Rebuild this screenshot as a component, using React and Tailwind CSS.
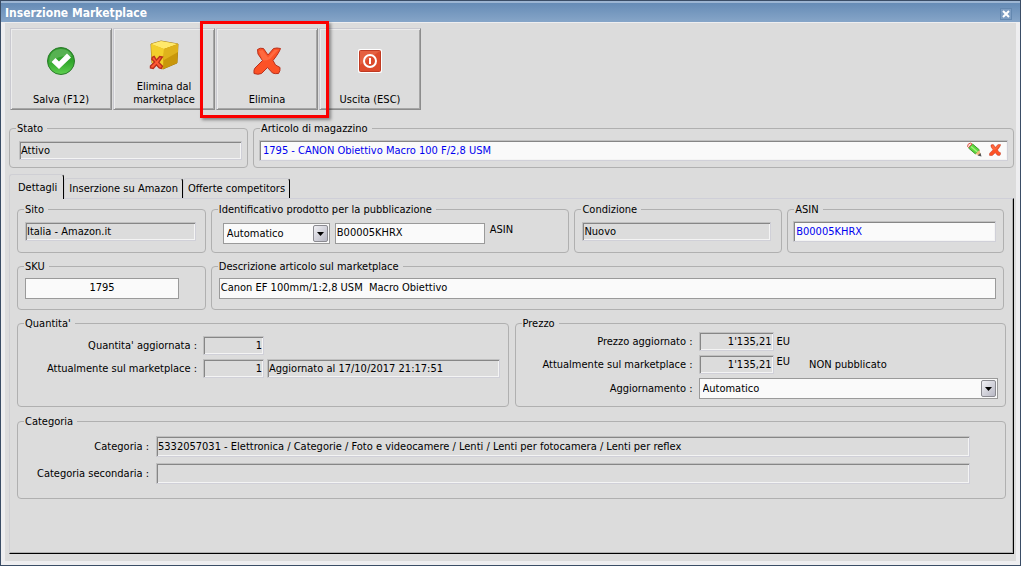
import { useState } from 'react';
import clsx from 'clsx';

const categoria = '5332057031 - Elettronica / Categorie / Foto e videocamere / Lenti / Lenti per fotocamera / Lenti per reflex';

const SaveIcon = () => (
  <svg width="30" height="30" viewBox="0 0 30 30">
    <defs>
      <linearGradient id="save" x1="0" y1="0" x2="0" y2="1">
        <stop offset="0" stopColor="#2f9a2c" />
        <stop offset="0.5" stopColor="#2fa52a" />
        <stop offset="1" stopColor="#5fd04f" />
      </linearGradient>
    </defs>
    <circle cx="15" cy="15" r="13.5" fill="url(#save)" stroke="#2b7a2b" />
    <path d="M3.5 12 A12 12 0 0 1 26 10 Q14 8 3.5 17 Z" fill="#7fc47a" opacity="0.5" />
    <path d="M5.500 16 L9.500 12 L13 15.500 L21 7.500 L25 11.500 L13 23 Z" fill="#fff" />
  </svg>
);

const CrossIcon = ({ size }) => (
  <svg width={size} height={size} viewBox="0 0 28 28">
    <path
      d="M4.500 2.500 Q7 0.500 10.500 1.500 L15 8 L20.500 1.500 Q24 0.500 27.500 1.500 Q26 6 20 13.500 L22.500 18 L27 20.500 Q27.500 24 25.500 26.500 Q22 27 19.500 26 L14.500 20.500 L8.500 26.500 Q5 28 1 26.500 Q0.500 22.500 2 21 L9.500 13.500 L5 7 Z"
      fill="#fc5226"
      stroke="#b8301c"
      strokeLinejoin="round"
    />
    <path d="M6 4 L9.500 3 L15 10.500 L21.500 3 L25 3 L17 12 Q10 15 9 12 Z" fill="#ff6a40" />
  </svg>
);

const BoxIcon = () => (
  <svg width="30" height="30" viewBox="0 0 30 30">
    <path d="M2 4 L12 1 L29 4 L28 23 L14 29 L3 23 Z" fill="#e0b010" stroke="#a8801a" />
    <path d="M2 4 L12 1 L29 4 L15 9 Z" fill="#ffe96b" />
    <path d="M2 4 L15 9 L14 29 L3 23 Z" fill="#f3cf2c" />
    <path d="M15 9 L29 4 L28 23 L14 29 Z" fill="#c9970b" />
    <path d="M15 9 L29 4 L29 12 L15 20 Z" fill="#dfb21c" />
    <g transform="translate(1 16) scale(0.460)">
      <path d="M5 3 L9 1 L14 9 L21 1 L27 2 L19 14 L27 22 L25 27 L20 26 L14 19 L7 27 L1 26 L1 22 L10 13 L4 7 Z" fill="#ff5a34" stroke="#b8301c" strokeWidth="3" />
    </g>
  </svg>
);

const ExitIcon = () => (
  <svg width="24" height="24" viewBox="0 0 24 24">
    <rect width="24" height="24" rx="2" fill="#fff" />
    <rect x="1.500" y="1.500" width="21" height="21" rx="1" fill="#dd4a2c" stroke="#c03a22" />
    <path d="M2 2 H22 L2 16 Z" fill="#ee7656" opacity="0.500" />
    <circle cx="12" cy="12" r="6" fill="none" stroke="#fff" strokeWidth="2" />
    <path d="M12 9 V15" stroke="#fff" strokeWidth="2" />
  </svg>
);

const PencilIcon = () => (
  <svg width="16" height="16" viewBox="0 0 16 16">
    <path d="M2.500 6 L6.500 2 L13.500 8 L9.500 12 Z" fill="#5cd83c" stroke="#3f9a30" />
    <path d="M5 4.500 L11.500 10" stroke="#a8f080" strokeWidth="1.500" />
    <path d="M1.500 4.500 Q1.500 1.500 4.500 1 L6 2 L2.500 5.500 Z" fill="#f8e0dc" stroke="#dc5a4a" />
    <path d="M13.500 8 L15 14 L9.500 12 Z" fill="#f0b878" />
    <path d="M14.500 11 L15.500 14.500 L11.500 13.500 Z" fill="#555" />
  </svg>
);

function ToolButton({ icon, label, highlighted }) {
  return (
    <div className={clsx('relative', highlighted && 'z-10')}>
      <button
        type="button"
        className="flex h-[82px] w-[102px] flex-col items-center border border-t-[#c9c9d0] border-l-[#c9c9d0] border-r-[#8c8c8c] border-b-[#8c8c8c] bg-[#dcdcdc] pb-[3px] leading-[13px] shadow-[inset_1px_1px_0_#ececec,inset_-1px_-1px_0_#a6a6a6]"
      >
        <span className="flex min-h-0 flex-1 items-center justify-center">{icon}</span>
        <span className="w-20">{label}</span>
      </button>
      {highlighted && (
        <div className="pointer-events-none absolute -top-[7px] -left-4 h-[97px] w-[129px] border-3 border-[#fb0000] shadow-[2px_2px_3px_rgba(0,0,0,0.4)]" />
      )}
    </div>
  );
}

function Group({ title, className, children }) {
  return (
    <fieldset className={clsx('min-w-0 rounded border border-[#b0b0b0] px-[5px]', className)}>
      <legend className="ml-px pr-1 pl-px leading-[13px]">{title}</legend>
      {children}
    </fieldset>
  );
}

// Sunken read-only field
function Field({ className, ...props }) {
  return (
    <input
      readOnly
      className={clsx(
        'min-w-0 border border-t-[#c0c0c0] border-l-[#c0c0c0] border-r-[#d0d0d8] border-b-[#d0d0d8] px-px shadow-[inset_1px_1px_0_#868686,inset_-1px_-1px_0_#f4f4f4] outline-none',
        className
      )}
      {...props}
    />
  );
}

function TextBox({ className, ...props }) {
  return (
    <input
      type="text"
      className={clsx('h-[21px] min-w-0 border border-[#9a9a9a] bg-[#fafafa] px-px pb-[2px] outline-none', className)}
      {...props}
    />
  );
}

function Select({ className, ...props }) {
  return (
    <div className={clsx('relative h-[21px]', className)}>
      <select className="h-full w-full appearance-none border border-[#9a9a9a] bg-[#fafafa] px-[3px] outline-none" {...props}>
        <option>Automatico</option>
        <option>Manuale</option>
      </select>
      <span className="pointer-events-none absolute top-[2px] right-[2px] flex h-[17px] w-[15px] items-center justify-center rounded-[2px] border border-[#8a8a90] bg-linear-to-br from-[#f0f0f4] to-[#b8b8c4]">
        <svg width="7" height="4" viewBox="0 0 7 4">
          <path d="M0 0 H7 L3.500 4 Z" fill="#000" />
        </svg>
      </span>
    </div>
  );
}

export default function App() {
  const [tab, setTab] = useState('Dettagli');
  const [asinCode, setAsinCode] = useState('B00005KHRX');
  const [sku, setSku] = useState('1795');
  const [descrizione, setDescrizione] = useState('Canon EF 100mm/1:2,8 USM  Macro Obiettivo');

  return (
    <div className="flex min-h-screen flex-col border border-[#3a4d66] bg-[#dcdcdc] font-['DejaVu_Sans_Condensed','DejaVu_Sans',sans-serif] text-[11px] leading-[13px] text-black">
      <header className="flex h-[21px] items-center justify-between border-t-2 border-[#9db6d3] bg-linear-to-b from-[#668cb6] to-[#86a5c8] pt-[2px] pr-2 pl-1">
        <h1 className="text-[12px] font-bold text-white">Inserzione Marketplace</h1>
        <button type="button" aria-label="Chiudi" className="flex size-3 items-center justify-center border border-[#6488b0] bg-[#7d9dc2]">
          <svg width="8" height="8" viewBox="0 0 8 8" className="shrink-0">
            <path d="M1 1 L7 7 M7 1 L1 7" stroke="#fff" strokeWidth="2" />
          </svg>
        </button>
      </header>

      <main className="flex flex-1 flex-col border-x-4 border-t border-b-4 border-[#eeeef0] pt-[5px] pr-[2px] pb-[7px] pl-1">
        <div className="flex gap-px pl-px">
          <ToolButton icon={<SaveIcon />} label="Salva (F12)" />
          <ToolButton icon={<BoxIcon />} label="Elimina dal marketplace" />
          <ToolButton icon={<CrossIcon size={28} />} label="Elimina" highlighted />
          <ToolButton icon={<ExitIcon />} label="Uscita (ESC)" />
        </div>

        <div className="mt-3 flex gap-[5px]">
          <Group title="Stato" className="h-[46px] w-[239px]">
            <div className="flex pt-1.5 pl-1">
              <Field aria-label="Stato" defaultValue="Attivo" className="h-[19px] w-[223px]" />
            </div>
          </Group>
          <Group title="Articolo di magazzino" className="h-[46px] flex-1">
            <div className="relative flex pt-[5px]">
              <Field aria-label="Articolo di magazzino" defaultValue="1795 - CANON Obiettivo Macro 100 F/2,8 USM" className="h-[21px] flex-1 bg-[#fafafa] pr-12 pl-[3px] text-[#0000f0]" />
              <div className="absolute top-[7px] right-[7px] flex h-4 items-center gap-[7px]">
                <button type="button" aria-label="Modifica articolo"><PencilIcon /></button>
                <button type="button" aria-label="Rimuovi articolo"><CrossIcon size={12} /></button>
              </div>
            </div>
          </Group>
        </div>

        <div role="tablist" className="mt-1.5 flex h-6 items-end">
          {['Dettagli', 'Inserzione su Amazon', 'Offerte competitors'].map((name) => (
            <button
              key={name}
              type="button"
              role="tab"
              aria-selected={tab === name}
              onClick={() => setTab(name)}
              className={clsx(
                'rounded-t-[3px] border-t border-l border-t-[#cfcfd4] border-l-[#cfcfd4] border-r border-r-black',
                tab === name ? 'relative z-10 -mb-px h-[25px] bg-[#dcdcdc] pr-1.5 pl-2' : 'h-5 px-1'
              )}
            >
              {name}
            </button>
          ))}
        </div>

        <section className="flex flex-1 flex-col border border-t-[#cfcfd8] border-r-black border-b-black border-l-[#cfcfd4] pt-1 pr-[9px] pl-[7px] shadow-[inset_-1px_-1px_0_#b0b0b0]">
          <div className="grid grid-cols-[189fr_359fr_208fr_217fr] gap-[5px]">
            <Group title="Sito" className="h-[50px]">
              <div className="flex pt-1.5 pl-[2px]">
                <Field aria-label="Sito" defaultValue="Italia - Amazon.it" className="h-[19px] w-[171px]" />
              </div>
            </Group>
            <Group title="Identificativo prodotto per la pubblicazione" className="h-[50px]">
              <div className="flex gap-[5px] pt-[7px] pl-1.5">
                <Select aria-label="Tipo identificativo" className="w-[107px]" />
                <TextBox aria-label="Identificativo prodotto" value={asinCode} onChange={(e) => setAsinCode(e.target.value)} className="w-[150px]" />
                <span>ASIN</span>
              </div>
            </Group>
            <Group title="Condizione" className="h-[50px]">
              <div className="flex pt-1.5 pl-[2px]">
                <Field aria-label="Condizione" defaultValue="Nuovo" className="h-[19px] w-[189px]" />
              </div>
            </Group>
            <Group title="ASIN" className="h-[50px]">
              <div className="flex pt-[5px] pr-[2px]">
                <Field aria-label="ASIN" defaultValue={asinCode} className="h-[21px] flex-1 bg-[#fafafa] pl-[2px] text-[#0000f0]" />
              </div>
            </Group>
          </div>

          <div className="mt-[7px] grid grid-cols-[189fr_794fr] gap-[5px]">
            <Group title="SKU" className="h-[50px]">
              <div className="flex pt-[5px] pl-[2px]">
                <TextBox aria-label="SKU" value={sku} onChange={(e) => setSku(e.target.value)} className="w-[154px] text-center" />
              </div>
            </Group>
            <Group title="Descrizione articolo sul marketplace" className="h-[50px]">
              <div className="flex pt-[5px] pr-[2px] pl-[2px]">
                <TextBox aria-label="Descrizione articolo" value={descrizione} onChange={(e) => setDescrizione(e.target.value)} className="flex-1" />
              </div>
            </Group>
          </div>

          <div className="mt-[7px] -mr-[2px] grid grid-cols-2 gap-1.5">
            <Group title="Quantita'" className="h-[90px]">
              <div className="grid grid-cols-[174px_61px_1fr] items-center gap-y-1 pt-1.5 pr-[3px]">
                <label htmlFor="qta" className="text-right">Quantita' aggiornata :</label>
                <Field id="qta" defaultValue="1" className="col-span-2 ml-1.5 h-[19px] w-[61px] text-right" />
                <label htmlFor="qta-mkt" className="text-right">Attualmente sul marketplace :</label>
                <div className="col-span-2 flex gap-[3px] pl-1.5">
                  <Field id="qta-mkt" defaultValue="1" className="h-[19px] w-[61px] text-right" />
                  <Field aria-label="Aggiornato al" defaultValue="Aggiornato al 17/10/2017 21:17:51" className="h-[19px] flex-1" />
                </div>
              </div>
            </Group>
            <Group title="Prezzo" className="h-[90px]">
              <div className="grid grid-cols-[172px_1fr] items-center gap-x-1.5 gap-y-1 pt-[2px] pr-[2px]">
                <label htmlFor="prezzo" className="text-right">Prezzo aggiornato :</label>
                <div className="flex items-center gap-[3px]">
                  <Field id="prezzo" defaultValue="1'135,21" className="h-[19px] w-[75px] text-right" />
                  <span>EU</span>
                </div>
                <label htmlFor="prezzo-mkt" className="text-right">Attualmente sul marketplace :</label>
                <div className="flex items-center gap-[3px]">
                  <Field id="prezzo-mkt" defaultValue="1'135,21" className="h-[19px] w-[75px] text-right" />
                  <span className="self-start">EU</span>
                  <span className="ml-4">NON pubblicato</span>
                </div>
                <label htmlFor="aggiornamento" className="text-right">Aggiornamento :</label>
                <Select id="aggiornamento" className="w-full" />
              </div>
            </Group>
          </div>

          <Group title="Categoria" className="mt-2 -mr-[2px] h-[84px]">
            <div className="grid grid-cols-[126px_1fr] items-center gap-x-[7px] gap-y-1.5 pt-2 pr-[30px]">
              <label htmlFor="categoria" className="text-right">Categoria :</label>
              <Field id="categoria" defaultValue={categoria} className="h-[21px]" />
              <label htmlFor="categoria-sec" className="text-right">Categoria secondaria :</label>
              <Field id="categoria-sec" defaultValue="" className="h-[21px]" />
            </div>
          </Group>
        </section>
      </main>
    </div>
  );
}
